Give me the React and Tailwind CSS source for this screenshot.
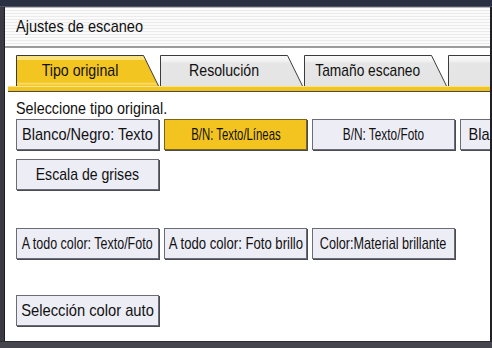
import React from "react";

const font = { fontFamily: '"Liberation Sans", Arial, sans-serif' };

function Tab({ label, active, sx }) {
  return (
    <div className="relative w-[143px] h-[31px] shrink-0">
      <svg className="absolute inset-0" width="143" height="31" viewBox="0 0 143 31">
        <defs>
          <linearGradient id="tabYellow" x1="0" y1="0" x2="0" y2="1">
            <stop offset="0" stopColor="#f9e27a" />
            <stop offset="0.14" stopColor="#f9e27a" />
            <stop offset="0.16" stopColor="#f3c521" />
            <stop offset="0.88" stopColor="#f3c521" />
            <stop offset="0.9" stopColor="#f8de78" />
            <stop offset="1" stopColor="#f3c521" />
          </linearGradient>
          <linearGradient id="tabGrey" x1="0" y1="0" x2="0" y2="1">
            <stop offset="0" stopColor="#fafafa" />
            <stop offset="0.18" stopColor="#f2f2f2" />
            <stop offset="0.25" stopColor="#e6e6e6" />
            <stop offset="1" stopColor="#e4e4e4" />
          </linearGradient>
        </defs>
        <polygon
          points="0.5,31 0.5,0.5 127.5,0.5 142.5,31"
          fill={active ? "url(#tabYellow)" : "url(#tabGrey)"}
        />
        <polyline
          points="0.5,31 0.5,0.5 127.5,0.5 142.5,31"
          fill="none"
          stroke="#3c3c3c"
          strokeWidth="1"
        />
      </svg>
      <div className="relative flex items-center justify-center w-[128px] h-full">
        <span className={`inline-block whitespace-nowrap text-[17px] text-[#111] ${sx}`}>{label}</span>
      </div>
    </div>
  );
}

function Btn({ label, active, sx }) {
  return (
    <div
      className={`w-[143px] h-[31px] shrink-0 flex items-center justify-center border shadow-[1px_1px_0_#4a4a52] ${
        active ? "bg-[#f3c41f] border-[#7a6418]" : "bg-[#ededf6] border-[#6c6c78]"
      }`}
    >
      <span className={`inline-block whitespace-nowrap text-[17px] text-[#111] ${sx}`}>{label}</span>
    </div>
  );
}

export default function App() {
  return (
    <div className="w-[492px] h-[348px] flex flex-col bg-[#3c3c44] overflow-hidden" style={font}>
      <div className="h-[7px] shrink-0 bg-[#283042] border-b border-[#4a5368]" />
      <div className="flex flex-1 min-h-0">
        <div className="w-[5px] shrink-0 bg-[#3a3a42] border-r border-[#1e1e22]" />
        <div className="w-[485px] shrink-0 bg-white flex flex-col overflow-hidden">
          {/* title */}
          <div className="h-[41px] shrink-0 flex items-center pl-[11px] border-t border-[#b8b8b8] border-b-2 border-b-[#9c9c9c] bg-[repeating-linear-gradient(180deg,#fbfbfb_0px,#fbfbfb_2px,#ebebeb_2px,#ebebeb_3px)]">
            <span className="inline-block whitespace-nowrap origin-left scale-x-[0.856] text-[17px] text-[#111]">
              Ajustes de escaneo
            </span>
          </div>

          {/* tabs */}
          <div className="mt-[7px] flex gap-px pl-[11px]">
            <Tab label="Tipo original" active sx="scale-x-[0.833]" />
            <Tab label="Resolución" sx="scale-x-[0.833]" />
            <Tab label="Tamaño escaneo" sx="scale-x-[0.81]" />
            <Tab label="" />
          </div>
          <div className="ml-[3px] h-[6px] shrink-0 border-b border-[#4a4a4a] bg-[linear-gradient(180deg,#f8e38a_0px,#f8e38a_1px,#f3c521_1px,#f3c521_4px,#e8b816_5px)]" />

          {/* content */}
          <div className="pl-[11px] pt-[6px]">
            <div className="h-[21px] flex items-center">
              <span className="inline-block whitespace-nowrap origin-left scale-x-[0.842] text-[17px] text-[#111]">
                Seleccione tipo original.
              </span>
            </div>
            <div className="flex gap-[5px]">
              <Btn label="Blanco/Negro: Texto" sx="scale-x-[0.856]" />
              <Btn label="B/N: Texto/Líneas" active sx="scale-x-[0.668]" />
              <Btn label="B/N: Texto/Foto" sx="scale-x-[0.696]" />
              <Btn label="Blanco/Negro: Foto" sx="scale-x-[0.856]" />
            </div>
            <div className="flex gap-[5px] mt-[9px]">
              <Btn label="Escala de grises" sx="scale-x-[0.828]" />
            </div>
            <div className="flex gap-[5px] mt-[38px]">
              <Btn label="A todo color: Texto/Foto" sx="scale-x-[0.734]" />
              <Btn label="A todo color: Foto brillo" sx="scale-x-[0.772]" />
              <Btn label="Color:Material brillante" sx="scale-x-[0.744]" />
            </div>
            <div className="flex gap-[5px] mt-[36px]">
              <Btn label="Selección color auto" sx="scale-x-[0.866]" />
            </div>
          </div>
        </div>
        <div className="w-[2px] shrink-0 bg-[#202024]" />
      </div>
      <div className="h-[7px] shrink-0 bg-[#45454d] border-t border-[#2a2a30]" />
    </div>
  );
}
